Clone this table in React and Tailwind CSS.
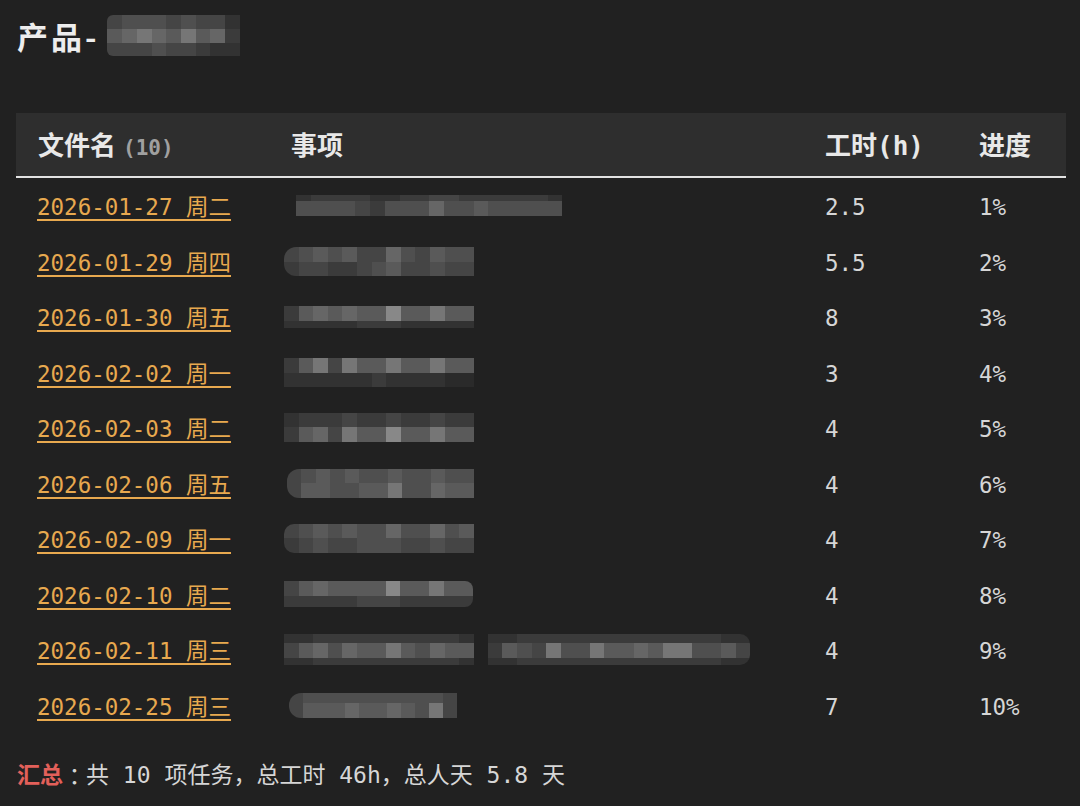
import React from "react";

const P = [
  "bg-[#2a2a2a]",
  "bg-[#323232]",
  "bg-[#3b3b3b]",
  "bg-[#454545]",
  "bg-[#4f4f4f]",
  "bg-[#5a5a5a]",
  "bg-[#666666]",
  "bg-[#767676]",
  "bg-[#888888]",
];

function Mosaic({ bands, cw, className = "" }) {
  return (
    <div className={`flex flex-col overflow-hidden ${className}`}>
      {bands.map((b, i) => (
        <div key={i} className={`flex ${b.h}`}>
          {b.v.split("").map((d, j) => (
            <div key={j} className={`${cw} shrink-0 ${P[Number(d)]}`} />
          ))}
        </div>
      ))}
    </div>
  );
}

const rows = [
  {
    date: "2026-01-27 周二",
    h: "2.5",
    p: "1%",
    m: [
      {
        ml: "ml-[26px]",
        cw: "w-[14.8px]",
        r: "",
        bands: [
          { h: "h-[6px]", v: "122221122332222221" },
          { h: "h-[15px]", v: "444432444644544444" },
        ],
      },
    ],
  },
  {
    date: "2026-01-29 周四",
    h: "5.5",
    p: "2%",
    m: [
      {
        ml: "ml-[14px]",
        cw: "w-[14.6px]",
        r: "rounded-l-[12px]",
        bands: [
          { h: "h-[15px]", v: "3454533643544" },
          { h: "h-[14px]", v: "2332234533433" },
        ],
      },
    ],
  },
  {
    date: "2026-01-30 周五",
    h: "8",
    p: "3%",
    m: [
      {
        ml: "ml-[14px]",
        cw: "w-[14.6px]",
        r: "",
        bands: [
          { h: "h-[15px]", v: "2565655855755" },
          { h: "h-[7px]", v: "1111122211111" },
        ],
      },
    ],
  },
  {
    date: "2026-02-02 周一",
    h: "3",
    p: "4%",
    m: [
      {
        ml: "ml-[14px]",
        cw: "w-[14.6px]",
        r: "",
        bands: [
          { h: "h-[15px]", v: "2573755755755" },
          { h: "h-[14px]", v: "1111112111100" },
        ],
      },
    ],
  },
  {
    date: "2026-02-03 周二",
    h: "4",
    p: "5%",
    m: [
      {
        ml: "ml-[14px]",
        cw: "w-[14.6px]",
        r: "",
        bands: [
          { h: "h-[14px]", v: "1222322322322" },
          { h: "h-[15px]", v: "2563755855755" },
        ],
      },
    ],
  },
  {
    date: "2026-02-06 周五",
    h: "4",
    p: "6%",
    m: [
      {
        ml: "ml-[17px]",
        cw: "w-[14.4px]",
        r: "rounded-l-[12px]",
        bands: [
          { h: "h-[14px]", v: "3454544544544" },
          { h: "h-[15px]", v: "3554455744655" },
        ],
      },
    ],
  },
  {
    date: "2026-02-09 周一",
    h: "4",
    p: "7%",
    m: [
      {
        ml: "ml-[14px]",
        cw: "w-[14.6px]",
        r: "rounded-l-[10px]",
        bands: [
          { h: "h-[14px]", v: "3454544644645" },
          { h: "h-[15px]", v: "2343344433433" },
        ],
      },
    ],
  },
  {
    date: "2026-02-10 周二",
    h: "4",
    p: "8%",
    m: [
      {
        ml: "ml-[14px]",
        cw: "w-[14.5px]",
        r: "rounded-r-[8px]",
        bands: [
          { h: "h-[15px]", v: "3565555855755" },
          { h: "h-[11px]", v: "2222233322222" },
        ],
      },
    ],
  },
  {
    date: "2026-02-11 周三",
    h: "4",
    p: "9%",
    m: [
      {
        ml: "ml-[14px]",
        cw: "w-[14.6px]",
        r: "",
        bands: [
          { h: "h-[9px]", v: "1122222222221" },
          { h: "h-[15px]", v: "3564655754655" },
          { h: "h-[7px]", v: "1122222222221" },
        ],
      },
      {
        ml: "ml-[14px]",
        cw: "w-[14.6px]",
        r: "rounded-r-[10px]",
        bands: [
          { h: "h-[9px]", v: "112222222222222211" },
          { h: "h-[15px]", v: "254374475565774453" },
          { h: "h-[7px]", v: "112222222222222211" },
        ],
      },
    ],
  },
  {
    date: "2026-02-25 周三",
    h: "7",
    p: "10%",
    m: [
      {
        ml: "ml-[19px]",
        cw: "w-[14px]",
        r: "rounded-l-[12px]",
        bands: [
          { h: "h-[10px]", v: "344444444443" },
          { h: "h-[15px]", v: "355565565473" },
        ],
      },
    ],
  },
];

const FONT = "font-['DejaVu_Sans_Mono','Noto_Sans_CJK_SC',monospace]";

export default function App() {
  return (
    <div
      className={`w-[1080px] h-[806px] overflow-hidden bg-[#212121] pl-4 text-[#d6d6d6] ${FONT}`}
    >
      <div className="flex h-[70px] items-center pl-[1px]">
        <span className="text-[31px] font-bold leading-none tracking-[3px] text-[#ededed] font-['Noto_Sans_CJK_SC',sans-serif]">
          产品-
        </span>
        <Mosaic
          className="ml-[8px] rounded-l-[6px]"
          cw="w-[14.7px]"
          bands={[
            { h: "h-[14px]", v: "344434331" },
            { h: "h-[14px]", v: "567657562" },
            { h: "h-[13px]", v: "333433211" },
          ]}
        />
      </div>

      <div className="mt-[43px] w-[1050px]">
        <div className="grid h-[65px] grid-cols-[254px_534px_154px_108px] items-center border-b-2 border-[#e2e2e2] bg-[#2e2e2e] pt-[3px] text-[26px] font-bold text-[#e8e8e8]">
          <div className="flex items-baseline pl-[22px]">
            <span>文件名</span>
            <span className="ml-[7px] text-[21px] text-[#a0a0a0]">(10)</span>
          </div>
          <div className="pl-[21px]">事项</div>
          <div className="pl-[21px]">工时(h)</div>
          <div className="pl-[21px]">进度</div>
        </div>

        {rows.map((r) => (
          <div
            key={r.date}
            className="grid h-[55.5px] grid-cols-[254px_534px_154px_108px] items-center text-[22.5px]"
          >
            <div className="pl-[21px] pt-[5px]">
              <span className="text-[#e8a94f] underline decoration-[1.5px] underline-offset-[4px]">
                {r.date}
              </span>
            </div>
            <div className="flex items-center">
              {r.m.map((m, i) => (
                <Mosaic
                  key={i}
                  className={`${m.ml} ${m.r}`}
                  cw={m.cw}
                  bands={m.bands}
                />
              ))}
            </div>
            <div className="pl-[21px] pt-[5px]">{r.h}</div>
            <div className="pl-[21px] pt-[5px]">{r.p}</div>
          </div>
        ))}
      </div>

      <div className="mt-[28px] flex h-[28px] items-center pl-[1px] text-[23px]">
        <span className="font-semibold text-[#e3605a]">汇总</span>
        <span className="font-['Noto_Sans_CJK_JP',sans-serif]">：</span>
        <span>共 10 项任务，总工时 46h，总人天 5.8 天</span>
      </div>
    </div>
  );
}
